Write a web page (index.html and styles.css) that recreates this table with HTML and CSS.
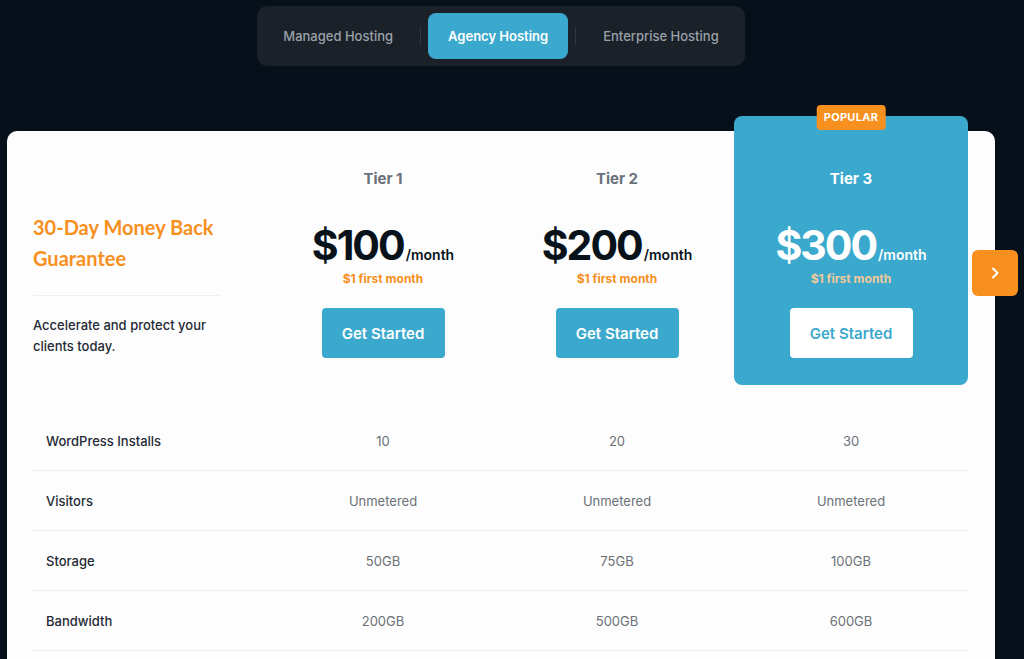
FILE: index.html
```html
<!DOCTYPE html>
<html>
<head>
<meta charset="utf-8">
<link rel="stylesheet" href="styles.css">
</head>
<body>
<div class="page">
  <nav class="tabs">
    <div class="tab">Managed Hosting</div>
    <span class="sep"></span>
    <div class="tab active">Agency Hosting</div>
    <span class="sep"></span>
    <div class="tab">Enterprise Hosting</div>
  </nav>

  <section class="card">
    <div class="head">
      <div class="intro">
        <h2 class="title">30-Day Money Back Guarantee</h2>
        <hr class="rule">
        <p class="desc">Accelerate and protect your clients today.</p>
      </div>
      <div class="plan">
        <div class="tier">Tier 1</div>
        <div class="price"><span class="amt">$100</span><span class="per">/month</span></div>
        <div class="promo">$1 first month</div>
        <button class="btn">Get Started</button>
      </div>
      <div class="plan">
        <div class="tier">Tier 2</div>
        <div class="price"><span class="amt">$200</span><span class="per">/month</span></div>
        <div class="promo">$1 first month</div>
        <button class="btn">Get Started</button>
      </div>
      <div class="plan popular">
        <span class="badge">POPULAR</span>
        <div class="tier">Tier 3</div>
        <div class="price"><span class="amt">$300</span><span class="per">/month</span></div>
        <div class="promo">$1 first month</div>
        <button class="btn">Get Started</button>
      </div>
    </div>

    <div class="rows">
      <div class="row"><div class="label">WordPress Installs</div><div class="val">10</div><div class="val">20</div><div class="val">30</div></div>
      <div class="row"><div class="label">Visitors</div><div class="val">Unmetered</div><div class="val">Unmetered</div><div class="val">Unmetered</div></div>
      <div class="row"><div class="label">Storage</div><div class="val">50GB</div><div class="val">75GB</div><div class="val">100GB</div></div>
      <div class="row"><div class="label">Bandwidth</div><div class="val">200GB</div><div class="val">500GB</div><div class="val">600GB</div></div>
    </div>

    <button class="next" aria-label="Next">
      <svg width="14" height="14" viewBox="0 0 14 14"><path d="M5 2.5 L9.5 7 L5 11.5" fill="none" stroke="#fff" stroke-width="2" stroke-linecap="round" stroke-linejoin="round"/></svg>
    </button>
  </section>
</div>
</body>
</html>
```

FILE: styles.css
```css
* { box-sizing: border-box; }
html, body { margin: 0; padding: 0; }
body {
  background: #06101a;
  font-family: Inter, "Noto Sans", sans-serif;
  height: 659px;
  overflow: hidden;
}
.page {
  width: 988px;
  margin-left: 7px;
  padding-top: 6px;
  display: flex;
  flex-direction: column;
  align-items: center;
}
.tabs {
  display: flex;
  align-items: center;
  background: #1a2129;
  border-radius: 10px;
  padding: 7px 6px;
  height: 60px;
}
.tab {
  height: 46px;
  padding: 0 20px;
  display: flex;
  align-items: center;
  font-size: 13px;
  font-weight: 500;
  color: #9aa1a9;
  border-radius: 8px;
}
.tab.active {
  background: #3ba9cd;
  color: #fff;
  font-weight: 600;
}
.sep {
  width: 1px;
  height: 18px;
  background: #2e3740;
  margin: 0 7px;
}
.card {
  position: relative;
  align-self: stretch;
  margin-top: 65px;
  background: #fdfdfd;
  border-radius: 10px 10px 0 0;
  padding: 0 27px 0 26px;
  height: 528px;
}
.head {
  display: grid;
  grid-template-columns: 233px repeat(3, 234px);
}
.intro {
  padding-top: 81px;
  padding-right: 30px;
}
.title {
  margin: 0;
  font-family: Lato, Inter, sans-serif;
  font-size: 20px;
  line-height: 31px;
  font-weight: 700;
  color: #f7901e;
}
.rule {
  border: 0;
  border-top: 1px solid #efefef;
  margin: 21px 16px 0 0;
}
.desc {
  margin: 19px 0 0;
  font-size: 13px;
  line-height: 21px;
  font-weight: 500;
  color: #1f2a35;
}
.plan {
  position: relative;
  display: flex;
  flex-direction: column;
  align-items: center;
  padding: 39px 0 27px;
}
.plan.popular {
  margin-top: -15px;
  padding-top: 54px;
  background: #3ba9cd;
  border-radius: 8px;
  color: #fff;
}
.tier {
  font-size: 15px;
  line-height: 18px;
  font-weight: 700;
  color: #6b7178;
}
.popular .tier { color: #fff; }
.price {
  margin-top: 33px;
  height: 48px;
  display: flex;
  align-items: baseline;
  line-height: 48px;
  color: #08121b;
}
.popular .price { color: #fff; }
.amt {
  font-size: 41px;
  font-weight: 700;
  letter-spacing: -2px;
}
.per {
  font-size: 14px;
  line-height: 14px;
  font-weight: 600;
  margin-left: 2px;
}
.promo {
  margin-top: 2px;
  font-size: 12px;
  line-height: 16px;
  font-weight: 700;
  color: #f7901e;
}
.popular .promo { color: #f2c99a; }
.btn {
  margin-top: 21px;
  width: 123px;
  height: 50px;
  border: 0;
  border-radius: 4px;
  background: #3ba9cd;
  color: #fff;
  font-family: inherit;
  font-size: 15px;
  font-weight: 600;
}
.popular .btn {
  background: #fff;
  color: #3ba9cd;
}
.badge {
  position: absolute;
  top: -11px;
  left: 50%;
  transform: translateX(-50%);
  background: #f7901e;
  color: #fff;
  font-size: 11px;
  font-weight: 700;
  letter-spacing: 0.3px;
  padding: 0 7px;
  height: 25px;
  line-height: 25px;
  border-radius: 4px;
}
.rows { margin-top: 26px; }
.row {
  display: grid;
  grid-template-columns: 233px repeat(3, 234px);
  height: 60px;
  align-items: center;
  border-bottom: 1px solid #ececec;
}
.label {
  padding-left: 13px;
  font-size: 13px;
  font-weight: 500;
  color: #1f2a35;
}
.val {
  text-align: center;
  font-size: 13px;
  color: #6b7178;
}
.next {
  position: absolute;
  top: 119px;
  right: -23px;
  width: 46px;
  height: 46px;
  border: 0;
  border-radius: 6px;
  background: #f7901e;
  display: flex;
  align-items: center;
  justify-content: center;
  padding: 0;
}
```
